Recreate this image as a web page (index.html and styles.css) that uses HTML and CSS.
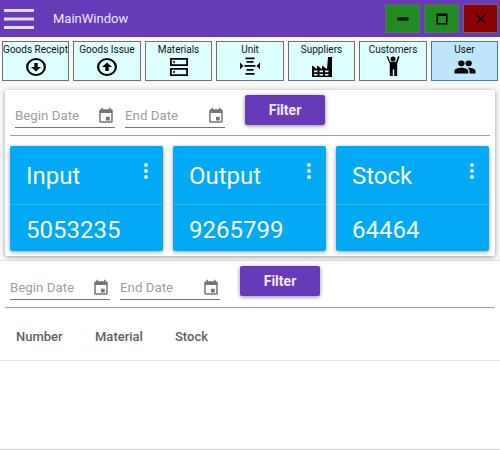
FILE: index.html
```html
<!DOCTYPE html>
<html lang="en">

<head>
  <meta charset="UTF-8">
  <title>MainWindow</title>
  <link rel="stylesheet" href="styles.css">
</head>

<body>
  <header class="title-bar">
    <svg class="menu-icon" viewBox="0 0 30 20" width="30" height="20">
      <rect x="0" y="0" width="30" height="3" />
      <rect x="0" y="8.5" width="30" height="3" />
      <rect x="0" y="17" width="30" height="3" />
    </svg>
    <span class="window-title">MainWindow</span>
    <div class="window-buttons">
      <button class="win-btn green">
        <svg viewBox="0 0 24 24" width="24" height="24"><rect x="6.500" y="10.500" width="11" height="3" /></svg>
      </button>
      <button class="win-btn green">
        <svg viewBox="0 0 24 24" width="24" height="24"><path d="M6.500 6.500h11v11h-11z M8 9v7h8V9z" fill-rule="evenodd" /></svg>
      </button>
      <button class="win-btn red">
        <svg viewBox="0 0 24 24" width="24" height="24"><path d="M7.500 7.500l9 9M16.500 7.500l-9 9" stroke="#000" stroke-width="1.300" fill="none" /></svg>
      </button>
    </div>
  </header>

  <nav class="nav-row">
    <a class="nav-btn b1"><span>Goods Receipt</span>
      <svg class="icon-round" viewBox="2 2 20 20" width="20" height="18" preserveAspectRatio="none"><path d="M12 2a10 10 0 1 0 0 20 10 10 0 0 0 0-20zm0 2.200a7.800 7.800 0 1 1 0 15.600 7.800 7.800 0 0 1 0-15.600zM10.300 7.500h3.400V12h3.300L12 17l-5-5h3.300z" fill-rule="evenodd" /></svg>
    </a>
    <a class="nav-btn b2"><span>Goods Issue</span>
      <svg class="icon-round" viewBox="2 2 20 20" width="20" height="18" preserveAspectRatio="none"><path d="M12 2a10 10 0 1 0 0 20 10 10 0 0 0 0-20zm0 2.200a7.800 7.800 0 1 1 0 15.600 7.800 7.800 0 0 1 0-15.600zM10.300 16.500h3.400V12h3.300L12 7l-5 5h3.300z" fill-rule="evenodd" /></svg>
    </a>
    <a class="nav-btn b3"><span>Materials</span>
      <svg viewBox="0 0 24 24" width="24" height="24"><path d="M3 3h18v8H3zM4.800 4.800v4.400h14.400V4.800zM3 13h18v8H3zM4.800 14.800v4.400h14.400v-4.400zM6 6.200h2v1.600H6zM6 16.200h2v1.600H6z" fill-rule="evenodd" /></svg>
    </a>
    <a class="nav-btn b4"><span>Unit</span>
      <svg viewBox="0 0 24 24" width="24" height="24"><path d="M7.500 2.500h9v1.700h-9zM8.500 6h7v1.700h-7zM6.500 10h11v1.700h-11zM8.500 14h7v1.700h-7zM7.500 18h9v1.700h-9zM2 7.500l3.500 3.400L2 14.300zM22 7.500l-3.500 3.400 3.500 3.400z" /></svg>
    </a>
    <a class="nav-btn b5"><span>Suppliers</span>
      <svg viewBox="0 0 24 24" width="24" height="24"><path d="M2 22V10.500l5 3.500v-3.500l5 3.500v-3.500l5 3.500L18 2h4v20zM4 15.500v1.800h3.500v-1.800zM9.500 15.500v1.800H13v-1.800zM15 15.500v1.800h3.500v-1.800zM4 19v1.500h3.500V19zM9.500 19v1.500H13V19zM15 19v1.500h3.500V19z" fill-rule="evenodd" /></svg>
    </a>
    <a class="nav-btn b6"><span>Customers</span>
      <svg viewBox="0 0 24 24" width="24" height="24"><circle cx="12" cy="4" r="2.500" /><path d="M5.500 1.500L7 1.200 9 6.800h6l2-5.600 1.500.3-2.300 7.500V21h-3v-6.500h-1.400V21h-3V9z" /></svg>
    </a>
    <a class="nav-btn b7 active"><span>User</span>
      <svg class="icon-people" viewBox="0 3.500 24 17" width="22" height="14" preserveAspectRatio="none"><path d="M16 11a3.500 3.500 0 1 0 0-7 3.500 3.500 0 0 0 0 7zm-8 0a3.500 3.500 0 1 0 0-7 3.500 3.500 0 0 0 0 7zm0 2c-2.700 0-7.500 1.300-7.500 4v3h15v-3c0-2.700-4.800-4-7.500-4zm8 0c-.3 0-.7 0-1.100.1 1.300.9 2.100 2.200 2.100 3.900v3h6.500v-3c0-2.700-4.800-4-7.500-4z" /></svg>
    </a>
  </nav>

  <section class="summary-card">
    <div class="filter-row">
      <div class="date-field"><span>Begin Date</span>
        <svg viewBox="0 0 24 24" width="18" height="18"><path d="M19 3h-1V1h-2v2H8V1H6v2H5a2 2 0 0 0-2 2v14a2 2 0 0 0 2 2h14a2 2 0 0 0 2-2V5a2 2 0 0 0-2-2zm0 16H5V8h14zm-7-6h5v5h-5z" fill-rule="evenodd" /></svg>
      </div>
      <div class="date-field"><span>End Date</span>
        <svg viewBox="0 0 24 24" width="18" height="18"><path d="M19 3h-1V1h-2v2H8V1H6v2H5a2 2 0 0 0-2 2v14a2 2 0 0 0 2 2h14a2 2 0 0 0 2-2V5a2 2 0 0 0-2-2zm0 16H5V8h14zm-7-6h5v5h-5z" fill-rule="evenodd" /></svg>
      </div>
      <button class="filter-btn">Filter</button>
    </div>
    <hr class="rule">
    <div class="stat-grid">
      <div class="stat">
        <div class="stat-head">Input<i class="dots"><b></b><b></b><b></b></i></div>
        <div class="stat-value">5053235</div>
      </div>
      <div class="stat">
        <div class="stat-head">Output<i class="dots"><b></b><b></b><b></b></i></div>
        <div class="stat-value">9265799</div>
      </div>
      <div class="stat">
        <div class="stat-head">Stock<i class="dots"><b></b><b></b><b></b></i></div>
        <div class="stat-value">64464</div>
      </div>
    </div>
  </section>

  <section class="stock-panel">
    <div class="filter-row lower">
      <div class="date-field"><span>Begin Date</span>
        <svg viewBox="0 0 24 24" width="18" height="18"><path d="M19 3h-1V1h-2v2H8V1H6v2H5a2 2 0 0 0-2 2v14a2 2 0 0 0 2 2h14a2 2 0 0 0 2-2V5a2 2 0 0 0-2-2zm0 16H5V8h14zm-7-6h5v5h-5z" fill-rule="evenodd" /></svg>
      </div>
      <div class="date-field"><span>End Date</span>
        <svg viewBox="0 0 24 24" width="18" height="18"><path d="M19 3h-1V1h-2v2H8V1H6v2H5a2 2 0 0 0-2 2v14a2 2 0 0 0 2 2h14a2 2 0 0 0 2-2V5a2 2 0 0 0-2-2zm0 16H5V8h14zm-7-6h5v5h-5z" fill-rule="evenodd" /></svg>
      </div>
      <button class="filter-btn">Filter</button>
    </div>
    <hr class="rule">
    <div class="table-head">
      <span class="col-number">Number</span>
      <span class="col-material">Material</span>
      <span class="col-stock">Stock</span>
    </div>
    <div class="table-body"></div>
  </section>
</body>

</html>
```

FILE: styles.css
```css
* {
  box-sizing: border-box;
}

html,
body {
  margin: 0;
  padding: 0;
}

body {
  width: 500px;
  height: 450px;
  overflow: hidden;
  background-color: #fafafa;
  font-family: Roboto, sans-serif;
}

/* Title bar */
.title-bar {
  display: flex;
  align-items: center;
  height: 37px;
  padding-left: 4px;
  background-color: #673ab7;
}

.menu-icon {
  fill: #e4dcf5;
}

.window-title {
  margin-left: 19px;
  font-size: 13px;
  color: #efe9fb;
}

.window-buttons {
  display: flex;
  gap: 4px;
  margin-left: auto;
  margin-right: 2px;
  align-self: flex-start;
  padding-top: 4px;
}

.win-btn {
  display: flex;
  align-items: center;
  justify-content: center;
  width: 35px;
  height: 29px;
  padding: 0;
  border: 1px solid #666;
}

.win-btn.green {
  background-color: #228b22;
}

.win-btn.red {
  background-color: #8b0000;
}

/* Nav row */
.nav-row {
  display: flex;
  height: 44px;
  padding: 4px 0 0 2px;
  background-color: #fafafa;
}

.nav-btn {
  display: flex;
  flex-direction: column;
  align-items: center;
  height: 40px;
  overflow: hidden;
  border: 1px solid #707070;
  background-color: #ddffff;
  font-size: 10px;
  line-height: 15px;
  color: #111;
  white-space: nowrap;
}

.nav-btn svg {
  flex: none;
  margin-top: -2px;
}

.nav-btn .icon-round {
  margin-top: 1px;
}

.nav-btn .icon-people {
  margin-top: 3px;
}

.nav-btn.active {
  border-color: #3c7fb1;
  background-color: #bee6fd;
}

.b1 { width: 67px; margin-right: 4px; }
.b2 { width: 68px; margin-right: 4px; }
.b3 { width: 67px; margin-right: 4px; }
.b4 { width: 68px; margin-right: 4px; }
.b5 { width: 67px; margin-right: 4px; }
.b6 { width: 68px; margin-right: 4px; }
.b7 { width: 67px; }

/* Summary card */
.summary-card {
  height: 166px;
  margin: 9px 5px 0;
  padding: 5px 5px 0;
  background-color: #fff;
  border-radius: 2px;
  box-shadow: 0 1px 5px rgba(0, 0, 0, .4);
}

.filter-row {
  display: flex;
  align-items: flex-start;
  height: 40px;
  padding-left: 5px;
}

.date-field {
  display: flex;
  align-items: center;
  justify-content: space-between;
  width: 100px;
  height: 24px;
  margin-top: 9px;
  margin-right: 10px;
  border-bottom: 1px solid #757575;
  font-size: 13.33px;
  color: #9e9e9e;
}

.date-field svg {
  fill: #757575;
}

.filter-btn {
  width: 80px;
  height: 30px;
  margin-left: 10px;
  border: 0;
  border-radius: 2px;
  background-color: #673ab7;
  color: #efe9f8;
  font-family: Roboto, sans-serif;
  font-size: 14px;
  font-weight: 700;
  box-shadow: 0 1px 4px rgba(0, 0, 0, .45);
}

.rule {
  height: 1px;
  margin: 0;
  border: 0;
  background-color: #9e9e9e;
}

.stat-grid {
  display: grid;
  grid-template-columns: repeat(3, 153px);
  gap: 10px;
  margin-top: 10px;
}

.stat {
  height: 105px;
  background-color: #03a9f4;
  border-radius: 2px;
  color: #f2fbff;
  box-shadow: 0 1px 4px rgba(0, 0, 0, .4);
}

.stat-head {
  position: relative;
  height: 59px;
  padding: 13px 16px 0;
  border-bottom: 1px solid #29b6f6;
  font-size: 24px;
  line-height: 35px;
}

.stat-value {
  padding: 9px 16px 0;
  font-size: 24px;
  line-height: 32px;
}

.dots {
  position: absolute;
  top: 17px;
  right: 15px;
  display: flex;
  flex-direction: column;
  gap: 2px;
}

.dots b {
  width: 4px;
  height: 4px;
  border-radius: 50%;
  background-color: #e3f5fe;
}

/* Stock panel */
.stock-panel {
  height: 190px;
  margin-top: 4px;
  background-color: #fff;
  border-top: 1px solid #ddd;
  border-bottom: 1px solid #ccc;
}

.filter-row.lower {
  height: 46px;
  padding: 5px 0 0 10px;
}

.filter-row.lower .date-field {
  margin-top: 10px;
}

.stock-panel .rule {
  margin-left: 5px;
  margin-right: 5px;
}

.table-head {
  display: flex;
  height: 53px;
  padding-top: 5px;
  align-items: center;
  border-bottom: 1px solid #e0e0e0;
  font-size: 13px;
  font-weight: 500;
  color: #616161;
}

.col-number { margin-left: 16px; width: 79px; }
.col-material { width: 80px; }
```
